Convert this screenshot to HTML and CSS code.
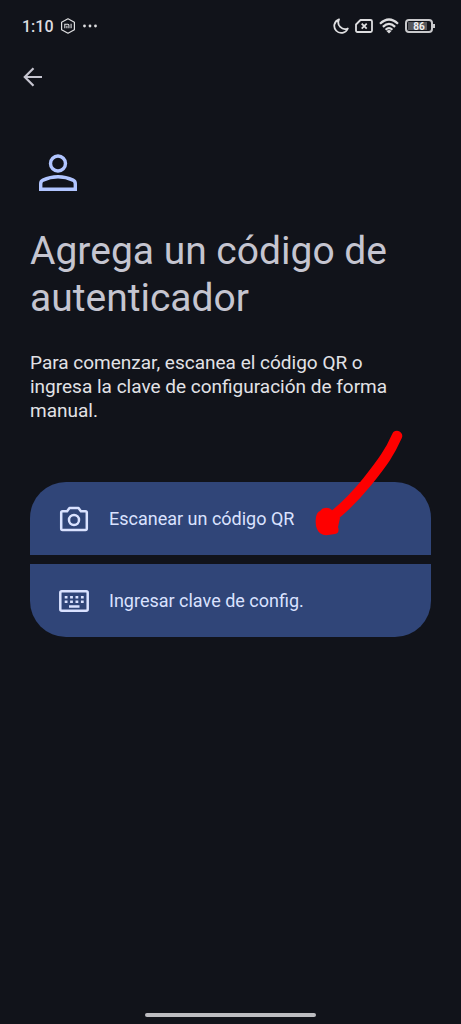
FILE: index.html
```html
<!DOCTYPE html>
<html lang="es">
<head>
<meta charset="utf-8">
<meta name="viewport" content="width=device-width, initial-scale=1">
<title>Agrega un código de autenticador</title>
<link rel="stylesheet" href="styles.css">
</head>
<body>
<div class="screen">
  <header class="status">
    <div class="status-group">
      <span class="clock">1:10</span>
      <svg width="16" height="16" viewBox="0 0 16 16" fill="none" stroke="currentColor"><path d="M8 .8 14.4 4.3v7.4L8 15.2 1.6 11.7V4.3z" stroke-width="1.2" stroke-linejoin="round"/><path d="M4.800 10.300V6.200h3.100q1 0 1 1v3.100M6.900 7.800v2.500M11.100 5.800v4.500" stroke-width="1.100"/></svg>
      <svg width="16" height="4" viewBox="0 0 16 4" fill="currentColor"><circle cx="2.500" cy="2" r="1.400"/><circle cx="8" cy="2" r="1.400"/><circle cx="13.500" cy="2" r="1.400"/></svg>
    </div>
    <div class="status-group">
      <svg width="16" height="16" viewBox="0 0 16 16" fill="none" stroke="currentColor" stroke-width="1.800" stroke-linejoin="round"><path d="M6 1.300A7 7 0 1 0 14.800 10.500 6.800 6.800 0 0 1 6 1.300z"/></svg>
      <svg width="18" height="14" viewBox="0 0 18 14" fill="none" stroke="currentColor" stroke-width="1.800"><path d="M5.500 1H15.500Q17 1 17 2.500V11.500Q17 13 15.500 13H2.500Q1 13 1 11.500V5.500z" stroke-linejoin="round"/><path d="m6.700 4.700 5 5m0-5-5 5"/></svg>
      <svg width="20" height="16" viewBox="0 0 20 16" fill="none" stroke="currentColor" stroke-width="2.200"><path d="M1 5.800Q10-2.800 19 5.800M3.900 8.900Q10 3 16.100 8.900M6.600 11.700Q10 8.500 13.400 11.700"/><path d="m10 15.500-2.500-2.400q2.500-2 5 0z" fill="currentColor" stroke="none"/></svg>
      <span class="battery"><span class="battery-cell">86</span></span>
    </div>
  </header>

  <nav class="nav">
    <button class="back" type="button" aria-label="Atrás">
      <svg width="20" height="20" viewBox="0 0 20 20" fill="none" stroke="currentColor" stroke-width="2.200"><path d="M19 10H2M10.500 1.300 1.800 10l8.700 8.700"/></svg>
    </button>
  </nav>

  <main class="content">
    <svg class="person" width="38" height="38" viewBox="0 0 38 38" fill="none" stroke="currentColor" stroke-width="3.400"><circle cx="19" cy="9.500" r="7.500"/><path d="M1.700 35.300V29.700Q1.700 27.300 4 26.100 11 22.700 19 22.700T34 26.100Q36.300 27.300 36.300 29.700V35.300z"/></svg>
    <h1 class="title">Agrega un código de autenticador</h1>
    <p class="intro">Para comenzar, escanea el código QR o ingresa la clave de configuración de forma manual.</p>
    <div class="options">
      <button class="option" type="button">
        <svg width="30" height="30" viewBox="0 0 30 30" fill="none" stroke="currentColor" stroke-width="2.500"><path d="M10.500 4h9l2.400 3.200H26.500Q27.800 7.200 27.800 8.500V24.500Q27.800 26 26.500 26H3.500Q2.200 26 2.200 24.500V8.500Q2.200 7.200 3.500 7.200H8.100z" stroke-linejoin="round"/><circle cx="15" cy="16" r="5"/></svg>
        <span>Escanear un código QR</span>
      </button>
      <button class="option" type="button">
        <svg width="30" height="30" viewBox="0 0 30 30" fill="none" stroke="currentColor" stroke-width="2.500"><rect x="1.300" y="5.300" width="27.400" height="19.400" rx="1.500"/><path d="M5.700 11.200H25M5.700 15.700H25" stroke-dasharray="2.800 2.600"/><path d="M10 20.500h10.500"/></svg>
        <span>Ingresar clave de config.</span>
      </button>
      <svg class="pointer" width="96" height="112" viewBox="0 0 96 112" aria-hidden="true"><path d="M86 8C79 24 72 34 56 54Q39 75 20 90" fill="none" stroke="#fe0000" stroke-width="10.500" stroke-linecap="round"/><path d="M14 80Q18 79 22 83L29 90 27 99Q29 105 24 106L17 107Q9 108 6 101 4 97 5 89 6 84 9 83 11 80 14 80z" fill="#fe0000"/></svg>
    </div>
  </main>
  <div class="home-bar"></div>
</div>
</body>
</html>
```
FILE: styles.css
```css
* { box-sizing: border-box; }
body {
  margin: 0;
  background: #11131a;
  color: #e2e2e6;
  font-family: Roboto, "Noto Sans", sans-serif;
}
svg { display: block; flex: none; }
button {
  border: 0;
  font: inherit;
  color: inherit;
  cursor: pointer;
}
.screen {
  min-height: 100vh;
  display: flex;
  flex-direction: column;
}
.status {
  display: flex;
  justify-content: space-between;
  align-items: center;
  height: 52px;
  padding: 0 28px 0 22px;
  color: #dedee0;
}
.status-group {
  display: flex;
  align-items: center;
  gap: 6px;
}
.clock {
  font-size: 16px;
  font-weight: 500;
}
.battery {
  position: relative;
  width: 28px;
  height: 14px;
  padding: 1px;
  border: 2px solid #c9c9cc;
  border-radius: 4px;
}
.battery::after {
  content: "";
  position: absolute;
  right: -4px;
  top: 3px;
  width: 2px;
  height: 4px;
  background: #c9c9cc;
}
.battery-cell {
  display: block;
  height: 8px;
  background: linear-gradient(90deg, #55565b 86%, transparent 86%);
  color: #f0f0f2;
  font-size: 10px;
  line-height: 9px;
  font-weight: 700;
  text-align: center;
}
.nav { padding: 5px 13px; }
.back {
  display: grid;
  place-items: center;
  width: 40px;
  height: 40px;
  padding: 0;
  background: none;
  color: #c6c5d0;
}
.content { padding: 52px 30px 0; }
.person {
  margin-left: 9px;
  color: #b1c5ff;
}
.title {
  margin: 36px 0 0;
  color: #c5c5d0;
  font-size: 39px;
  line-height: 47px;
  font-weight: 400;
}
.intro {
  margin: 29px 0 0;
  padding-right: 32px;
  font-size: 19px;
  line-height: 24px;
}
.options {
  position: relative;
  display: grid;
  gap: 9px;
  margin-top: 59px;
}
.option {
  display: flex;
  align-items: center;
  gap: 20px;
  height: 73px;
  padding: 0 29px;
  background: #304578;
  color: #dae2ff;
  font-size: 18px;
  text-align: left;
}
.option:first-child { border-radius: 36px 36px 0 0; }
.option:nth-child(2) { border-radius: 0 0 36px 36px; }
.pointer {
  position: absolute;
  top: -54px;
  right: 24px;
  pointer-events: none;
}
.home-bar {
  width: 37%;
  height: 4px;
  margin: auto auto 7px;
  border-radius: 2px;
  background: #bdbdc1;
}
```
